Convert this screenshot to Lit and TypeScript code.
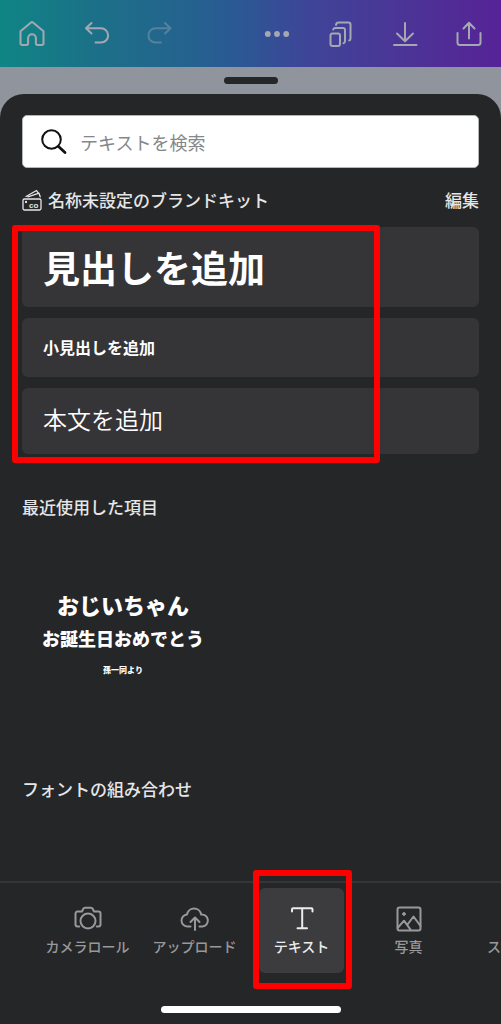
import { LitElement, html, css, svg } from "lit";
import { customElement } from "lit/decorators.js";

const icon = (size: number, width: number, body: unknown) => html`
  <svg width=${size} height=${size} viewBox="0 0 ${size} ${size}" fill="none" stroke="currentColor"
    stroke-width=${width} stroke-linecap="round" stroke-linejoin="round" aria-hidden="true">${body}</svg>`;

const homeIcon = icon(28, 2, svg`<path d="M2.5 11.2 13 2.5a1.6 1.6 0 0 1 2 0l10.5 8.7v12.3a1.5 1.5 0 0 1-1.5 1.5h-4.600a1.500 1.500 0 0 1-1.500-1.500v-5.300a3.900 3.900 0 0 0-7.800 0v5.300a1.500 1.500 0 0 1-1.500 1.500H4a1.500 1.500 0 0 1-1.500-1.500z"/>`);
const undoIcon = icon(28, 2, svg`<path d="M9.500 3 4 8.300l5.500 5.200M4.300 8.300H19a7 7 0 0 1 0 14.200h-5.500"/>`);
const redoIcon = icon(28, 2, svg`<path d="M19 3l5.500 5.300-5.500 5.200M24.200 8.300H9.500a7 7 0 0 0 0 14.200H15"/>`);
const moreIcon = icon(28, 0, svg`<g fill="currentColor"><circle cx="4.800" cy="14" r="2.900"/><circle cx="14" cy="14" r="2.900"/><circle cx="23.200" cy="14" r="2.900"/></g>`);
const pagesIcon = icon(28, 2, svg`<rect x="3.500" y="13.500" width="9.500" height="12.500" rx="2"/><path d="M6.200 9.500c.3-.9.900-1.500 2-1.500h7.800a2 2 0 0 1 2 2v11c0 1.200-.5 2-1.500 2.300M9 5c.3-1.500 1-2.500 2.300-2.500h10.200a2 2 0 0 1 2 2v14c0 1-.4 1.700-1.300 2"/>`);
const downloadIcon = icon(28, 2, svg`<path d="M14 3v18M6 13.500l8 7.700 8-7.700M3 25h22.500"/>`);
const shareIcon = icon(28, 2, svg`<path d="M14 18.500V3M8.500 8.500 14 2.800l5.500 5.700M2.500 13v9.500A2.500 2.500 0 0 0 5 25h18a2.500 2.500 0 0 0 2.500-2.500V13"/>`);
const searchIcon = icon(26, 2, svg`<circle cx="10.500" cy="10.500" r="9.300"/><path d="m17.500 17.500 6.500 6" stroke-width="2.800"/>`);
const cameraIcon = icon(30, 2, svg`<path d="M6.200 22.500H4.500a2 2 0 0 1-2-2V9.500a2 2 0 0 1 2-2H9l1.300-2.700A2 2 0 0 1 12 3.800h6a2 2 0 0 1 1.700 1L21 7.500h4.500a2 2 0 0 1 2 2v11a2 2 0 0 1-2 2h-1.700"/><circle cx="15" cy="17" r="7.500"/>`);
const cloudIcon = icon(30, 2, svg`<path d="M10.500 22.500H8a6 6 0 0 1-1-12 7.200 7.200 0 0 1 14.200 0 6 6 0 0 1 1.300 12H19.500M15 26V14M10.500 18l4.500-4.500 4.500 4.500"/>`);
const textIcon = icon(30, 2, svg`<path d="M5 7.500V5.300c0-.7.400-1.100 1.100-1.100h18.300c.700 0 1.100.400 1.100 1.100v2.200M15.200 4.200v20M10.500 24.300h9.500"/>`);
const photoIcon = icon(30, 2, svg`<rect x="3.500" y="3.500" width="23" height="23" rx="2"/><path d="m4 23.500 6-6.800 6.500 9M13.500 20.500l6-8 7 9.500"/><circle cx="10" cy="10" r="1.400" fill="currentColor" stroke-width="1"/>`);

@customElement("app-root")
export class AppRoot extends LitElement {
  static styles = css`
    :host {
      display: flex;
      flex-direction: column;
      min-height: 100vh;
      background: #90949d;
      color: #e6e6e7;
      font-family: "Noto Sans CJK JP", sans-serif;
      font-size: 17px;
      line-height: 24px;
    }
    *, *::before, *::after { box-sizing: border-box; }
    button {
      margin: 0;
      padding: 0;
      border: 0;
      background: none;
      color: inherit;
      font: inherit;
      cursor: pointer;
    }
    svg { display: block; }
    .toolbar {
      display: flex;
      justify-content: space-between;
      align-items: center;
      height: 67px;
      padding: 0 18px;
      color: #a5a8b2;
      background: linear-gradient(90deg, #0f8585 0%, #1b7188 18%, #25628f 38%, #2c5894 48%, #3f4498 62%, #4b3596 80%, #562396 100%);
    }
    .tools { display: flex; gap: 36px; }
    .tools .disabled { opacity: 0.4; }
    .grip {
      width: 54px;
      height: 7px;
      margin: 10px auto;
      border-radius: 4px;
      background: #252628;
    }
    .sheet {
      display: flex;
      flex-direction: column;
      flex: 1;
      border-radius: 24px 24px 0 0;
      background: #252628;
    }
    .content { flex: 1; padding: 21px 22px 0; }
    .search {
      display: flex;
      align-items: center;
      gap: 13px;
      height: 53px;
      padding: 0 18px;
      border: 1px solid #b4b5b6;
      border-radius: 5px;
      background: #fff;
      color: #111;
    }
    .search input {
      flex: 1;
      min-width: 0;
      padding: 0;
      border: 0;
      outline: 0;
      background: none;
      color: #222;
      font: inherit;
      font-size: 18px;
    }
    .search input::placeholder { color: #85878a; opacity: 1; }
    h2 { margin: 0; font-size: 17px; line-height: 24px; font-weight: 500; }
    .kit {
      display: flex;
      align-items: center;
      gap: 6px;
      margin: 20px 0 15px;
    }
    .kit h2 { flex: 1; }
    .kit button { font-weight: 500; }
    .kit-text { font: bold 8px/8px "Liberation Sans", sans-serif; }
    .presets { position: relative; display: grid; gap: 11px; }
    .preset {
      display: block;
      width: 100%;
      padding: 0 21px;
      border-radius: 6px;
      background: #353537;
      color: #fff;
      text-align: left;
    }
    .heading { font-size: 37px; font-weight: 700; line-height: 80px; }
    .subheading { font-size: 16px; font-weight: 700; line-height: 59px; }
    .body { padding-bottom: 4px; font-size: 24px; font-weight: 350; line-height: 62px; }
    .marked::after {
      content: "";
      position: absolute;
      border: 6px solid #f00;
      border-radius: 3px;
      pointer-events: none;
    }
    .presets.marked::after { inset: -2px 99px -9px -10px; }
    .recent-title { margin-top: 41px; }
    .recent {
      display: flex;
      flex-direction: column;
      align-items: center;
      justify-content: center;
      width: 202px;
      height: 202px;
      margin: 16px 0 40px;
      color: #fff;
      font-weight: 900;
    }
    .line-a { font-size: 22px; line-height: 34px; }
    .line-b { font-size: 18px; line-height: 34px; }
    .line-c { font-size: 8px; line-height: 30px; }
    .tabs {
      display: flex;
      height: 105px;
      padding: 5px 0 0 45px;
      border-top: 2px solid #353638;
    }
    .tab {
      position: relative;
      display: flex;
      flex-direction: column;
      align-items: center;
      flex: 0 0 85px;
      height: 85px;
      margin-right: 22px;
      padding-top: 16px;
      border-radius: 6px;
      color: #98999a;
      font-size: 14px;
      line-height: 22px;
      font-weight: 500;
      white-space: nowrap;
      gap: 1px;
    }
    .tab.active { background: #3c3c3e; color: #ececed; }
    .tab.marked::after { inset: -18px -8px -16px -6px; }
    .tab.next { flex: 1; align-items: flex-start; margin: 0; padding: 47px 0 0 14px; }
    .home-bar {
      width: 180px;
      height: 7px;
      margin: 20px auto 11px;
      border-radius: 4px;
      background: #fff;
    }
  `;

  render() {
    return html`
      <header class="toolbar">
        <div class="tools">
          <button aria-label="ホーム">${homeIcon}</button>
          <button aria-label="元に戻す">${undoIcon}</button>
          <button class="disabled" aria-label="やり直す">${redoIcon}</button>
        </div>
        <div class="tools">
          <button aria-label="その他">${moreIcon}</button>
          <button aria-label="ページ">${pagesIcon}</button>
          <button aria-label="ダウンロード">${downloadIcon}</button>
          <button aria-label="共有">${shareIcon}</button>
        </div>
      </header>
      <div class="grip"></div>
      <main class="sheet">
        <div class="content">
          <label class="search">
            ${searchIcon}
            <input type="search" placeholder="テキストを検索" aria-label="テキストを検索" />
          </label>
          <div class="kit">
            <svg width="20" height="22" viewBox="0 0 20 22" fill="none" stroke="currentColor" stroke-width="1.300" stroke-linejoin="round" stroke-linecap="round" aria-hidden="true">
              <rect x="1" y="10" width="18" height="11" rx="1.500" />
              <path d="M4 7.500 14.500 1.500l1.500 2.200M6 7.800l11-3.600 1.200 3.600" />
              <circle cx="4" cy="13" r=".5" fill="currentColor" />
              <text class="kit-text" x="7" y="18.500" fill="currentColor" stroke="none">co</text>
            </svg>
            <h2>名称未設定のブランドキット</h2>
            <button>編集</button>
          </div>
          <div class="presets marked">
            <button class="preset heading">見出しを追加</button>
            <button class="preset subheading">小見出しを追加</button>
            <button class="preset body">本文を追加</button>
          </div>
          <h2 class="recent-title">最近使用した項目</h2>
          <button class="recent">
            <span class="line-a">おじいちゃん</span>
            <span class="line-b">お誕生日おめでとう</span>
            <span class="line-c">孫一同より</span>
          </button>
          <h2>フォントの組み合わせ</h2>
        </div>
        <nav class="tabs">
          <button class="tab">${cameraIcon}<span>カメラロール</span></button>
          <button class="tab">${cloudIcon}<span>アップロード</span></button>
          <button class="tab active marked" aria-current="page">${textIcon}<span>テキスト</span></button>
          <button class="tab">${photoIcon}<span>写真</span></button>
          <button class="tab next">ス</button>
        </nav>
        <div class="home-bar"></div>
      </main>
    `;
  }
}
